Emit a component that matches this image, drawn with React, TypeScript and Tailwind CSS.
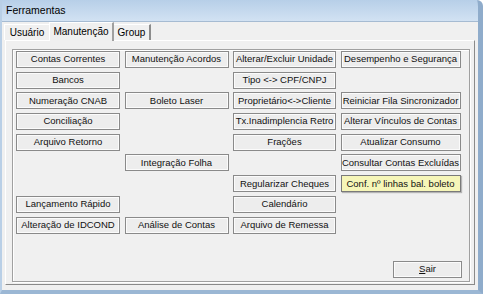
const rows: (string | null)[][] = [
  ['Contas Correntes', 'Manutenção Acordos', 'Alterar/Excluir Unidade', 'Desempenho e Segurança'],
  ['Bancos', null, 'Tipo <-> CPF/CNPJ', null],
  ['Numeração CNAB', 'Boleto Laser', 'Proprietário<->Cliente', 'Reiniciar Fila Sincronizador'],
  ['Conciliação', null, 'Tx.Inadimplencia Retro', 'Alterar Vínculos de Contas'],
  ['Arquivo Retorno', null, 'Frações', 'Atualizar Consumo'],
  [null, 'Integração Folha', null, 'Consultar Contas Excluídas'],
  [null, null, 'Regularizar Cheques', 'Conf. nº linhas bal. boleto'],
  ['Lançamento Rápido', null, 'Calendário', null],
  ['Alteração de IDCOND', 'Análise de Contas', 'Arquivo de Remessa', null],
];

function Btn({ label, hot }: { label: string; hot?: boolean }) {
  if (hot) {
    return (
      <div className="flex items-center justify-center border border-[#7a7a7a] bg-[#f6f6b8] shadow-[1px_1px_1px_rgba(0,0,0,0.25)] whitespace-nowrap">
        {label}
      </div>
    );
  }
  return (
    <div className="flex items-center justify-center border border-[#8a8a8a] bg-[#ededed] shadow-[inset_1px_1px_0_#fbfbfb,inset_-1px_-1px_0_#fbfbfb] whitespace-nowrap">
      {label}
    </div>
  );
}

export default function App() {
  return (
    <div className="w-[483px] h-[294px] flex flex-col bg-[#c3d7ec] border-l-2 border-l-[#b9cfe6] border-r-[5px] border-r-[#8faccb] border-b-4 border-b-[#9bb7d4] rounded-tr-[6px] shadow-[inset_-1px_-1px_0_#44688e] font-['Liberation_Sans',Arial,sans-serif] text-[9.5px] text-[#111] overflow-hidden">
      {/* title bar */}
      <div className="h-[21px] flex items-center pl-[4px] bg-gradient-to-b from-[#b7cfe8] to-[#d2e2f3] text-[10.5px] text-black">
        Ferramentas
      </div>

      <div className="flex-1 flex flex-col bg-[#f0f0f0] border-t border-[#a6bbd2]">
        {/* tabs */}
        <div className="h-[18px] flex items-end pl-[2px] text-[10px]">
          <div className="h-[16px] w-[45px] flex items-center justify-center border-t border-l border-white text-black">
            Usuário
          </div>
          <div className="h-[19px] w-[65px] -mb-px z-10 flex items-center justify-center bg-[#f0f0f0] border-t border-l border-white border-r-2 border-r-[#a0a0a0] text-black pb-[2px]">
            Manutenção
          </div>
          <div className="h-[16px] w-[37px] flex items-center justify-center border-t border-white border-r-2 border-r-[#8c8c8c] text-black">
            Group
          </div>
        </div>

        {/* tab page */}
        <div className="ml-[3px] w-[470px] h-[245px] border-t border-l border-white border-r border-r-[#8a8a8a] border-b border-b-[#8a8a8a] pt-[8px] pl-[6px]">
          <div className="w-[458px] h-[233px] flex flex-col border border-[#a0a0a0] shadow-[1px_1px_0_#fff,inset_1px_1px_0_#fff] pt-px pl-[3px] pr-[7px] pb-[3px]">
            <div className="grid grid-cols-[104px_104px_103px_120px] gap-x-[4.5px] gap-y-[3.7px] auto-rows-[17px]">
              {rows.map((row, r) =>
                row.map((label, c) =>
                  label ? (
                    <Btn key={`${r}-${c}`} label={label} hot={r === 6 && c === 3} />
                  ) : (
                    <div key={`${r}-${c}`} />
                  )
                )
              )}
            </div>
            <div className="mt-auto flex justify-end">
              <div className="w-[69px] h-[17px] flex items-center justify-center border border-[#8a8a8a] bg-[#ededed] shadow-[inset_1px_1px_0_#fbfbfb,inset_-1px_-1px_0_#fbfbfb]">
                <span className="underline underline-offset-1">S</span>air
              </div>
            </div>
          </div>
        </div>
      </div>
    </div>
  );
}
